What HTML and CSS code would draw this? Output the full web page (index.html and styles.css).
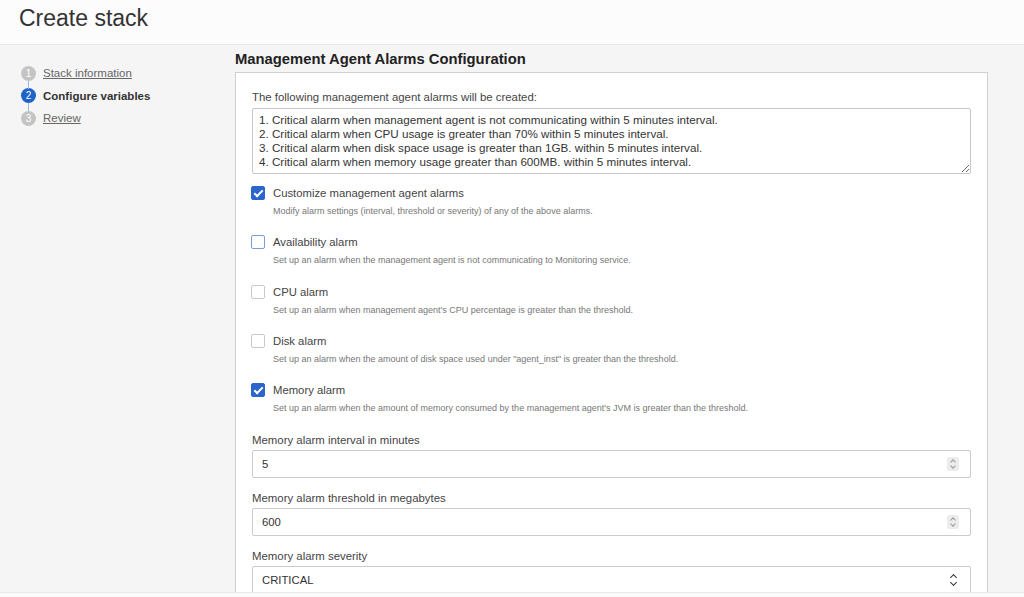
FILE: index.html
```html
<!DOCTYPE html>
<html lang="en">
<head>
  <meta charset="UTF-8" />
  <title>Create stack</title>
  <link rel="stylesheet" href="styles.css">
</head>
<body>
  <header class="page-header">
    <h1>Create stack</h1>
  </header>

  <div class="layout">
    <nav class="steps">
      <ol>
        <li class="step done"><span class="num">1</span><a href="#">Stack information</a></li>
        <li class="step current"><span class="num">2</span><span class="name">Configure variables</span></li>
        <li class="step"><span class="num">3</span><a href="#">Review</a></li>
      </ol>
    </nav>

    <main class="content">
      <h2>Management Agent Alarms Configuration</h2>
      <section class="panel">
        <label class="field-label">The following management agent alarms will be created:</label>
        <textarea class="alarm-list" readonly>1. Critical alarm when management agent is not communicating within 5 minutes interval.
2. Critical alarm when CPU usage is greater than 70% within 5 minutes interval.
3. Critical alarm when disk space usage is greater than 1GB. within 5 minutes interval.
4. Critical alarm when memory usage greater than 600MB. within 5 minutes interval.</textarea>

        <div class="check-row">
          <span class="box checked"></span>
          <span class="check-label">Customize management agent alarms</span>
        </div>
        <p class="hint">Modify alarm settings (interval, threshold or severity) of any of the above alarms.</p>

        <div class="check-row">
          <span class="box focused"></span>
          <span class="check-label">Availability alarm</span>
        </div>
        <p class="hint">Set up an alarm when the management agent is not communicating to Monitoring service.</p>

        <div class="check-row">
          <span class="box"></span>
          <span class="check-label">CPU alarm</span>
        </div>
        <p class="hint">Set up an alarm when management agent's CPU percentage is greater than the threshold.</p>

        <div class="check-row">
          <span class="box"></span>
          <span class="check-label">Disk alarm</span>
        </div>
        <p class="hint">Set up an alarm when the amount of disk space used under "agent_inst" is greater than the threshold.</p>

        <div class="check-row">
          <span class="box checked"></span>
          <span class="check-label">Memory alarm</span>
        </div>
        <p class="hint">Set up an alarm when the amount of memory consumed by the management agent's JVM is greater than the threshold.</p>

        <div class="field">
          <label class="field-label">Memory alarm interval in minutes</label>
          <div class="input"><span>5</span><span class="spin"></span></div>
        </div>

        <div class="field">
          <label class="field-label">Memory alarm threshold in megabytes</label>
          <div class="input"><span>600</span><span class="spin"></span></div>
        </div>

        <div class="field">
          <label class="field-label">Memory alarm severity</label>
          <div class="input select"><span>CRITICAL</span><span class="chev"></span></div>
        </div>
      </section>
    </main>
  </div>

  <footer class="page-footer"></footer>
</body>
</html>
```

FILE: styles.css
```css
* {
  margin: 0;
  padding: 0;
  box-sizing: border-box;
}

body {
  height: 100vh;
  display: flex;
  flex-direction: column;
  overflow: hidden;
  background-color: #f5f5f5;
  color: #333;
  font-family: "Liberation Sans", Arial, sans-serif;
}

.page-header {
  height: 45px;
  flex-shrink: 0;
  padding: 5px 19px 0;
  background-color: #fcfcfc;
  border-bottom: 1px solid #e6e6e6;
}

.page-header h1 {
  font-size: 23px;
  font-weight: normal;
  line-height: 26px;
  color: #333;
}

.layout {
  flex: 1;
  display: flex;
  overflow: hidden;
}

/* left wizard steps */
.steps {
  width: 235px;
  flex-shrink: 0;
  padding: 17px 0 0 21px;
}

.steps ol {
  list-style: none;
}

.step {
  position: relative;
  display: flex;
  align-items: center;
  gap: 7px;
  height: 22.5px;
  font-size: 11.5px;
}

.step + .step::before {
  content: "";
  position: absolute;
  left: 7px;
  top: -4px;
  width: 1px;
  height: 8px;
  background-color: #9fb8e0;
}

.step .num {
  width: 15px;
  height: 15px;
  border-radius: 50%;
  background-color: #c4c4c4;
  color: #fff;
  font-size: 10px;
  line-height: 15px;
  text-align: center;
}

.step a {
  color: #666;
  text-decoration: underline;
}

.step.current .num {
  background-color: #1f62c8;
}

.step.current .name {
  font-weight: bold;
  color: #333;
}

/* main form */
.content {
  width: 753px;
  padding-top: 6px;
}

.content h2 {
  font-size: 14.8px;
  line-height: 17px;
  font-weight: bold;
  color: #222;
  margin-bottom: 4px;
}

.panel {
  background-color: #fff;
  border: 1px solid #cfcfcf;
  border-bottom: none;
  padding: 17px 17px 40px 16px;
  height: 600px;
}

.field-label {
  display: block;
  font-size: 11.4px;
  line-height: 14px;
  color: #444;
}

.alarm-list {
  display: block;
  width: 719px;
  height: 66px;
  margin-top: 4px;
  padding: 4px 6px;
  border: 1px solid #c8c8c8;
  border-radius: 2px;
  font-family: "Liberation Sans", Arial, sans-serif;
  font-size: 11.65px;
  line-height: 14px;
  color: #333;
  resize: vertical;
  overflow: hidden;
}

.check-row {
  display: flex;
  align-items: center;
  gap: 8px;
  height: 14px;
  margin-top: 18.25px;
  margin-left: -1px;
}

.alarm-list + .check-row {
  margin-top: 12px;
}

.box {
  width: 14px;
  height: 14px;
  border: 1px solid #c9c9c9;
  border-radius: 2px;
  background-color: #fff;
  position: relative;
}

.box.focused {
  border: 1.5px solid #7b9be0;
}

.box.checked {
  background-color: #2c66cc;
  border-color: #2c66cc;
}

.box.checked::after {
  content: "";
  position: absolute;
  left: 4px;
  top: 1px;
  width: 3px;
  height: 7px;
  border: solid #fff;
  border-width: 0 2px 2px 0;
  transform: rotate(45deg);
}

.check-label {
  font-size: 11.3px;
  color: #444;
}

.hint {
  margin-top: 6px;
  margin-left: 21px;
  font-size: 9px;
  line-height: 11px;
  color: #777;
}

.field {
  margin-top: 13px;
}

.hint + .field {
  margin-top: 19px;
}

.input {
  display: flex;
  align-items: center;
  justify-content: space-between;
  width: 719px;
  height: 28px;
  margin-top: 3px;
  padding: 0 11px 0 9px;
  border: 1px solid #cbcbcb;
  border-radius: 2px;
  background-color: #fff;
  font-size: 11.3px;
  color: #333;
}

.spin {
  width: 12px;
  height: 14px;
  background-color: #ececec;
  border-radius: 2px;
  position: relative;
}

.spin::before,
.spin::after {
  content: "";
  position: absolute;
  left: 4px;
  width: 3px;
  height: 3px;
  border: solid #999;
  border-width: 1px 0 0 1px;
}

.spin::before {
  top: 3px;
  transform: rotate(45deg);
}

.spin::after {
  top: 7px;
  transform: rotate(225deg);
}

.select .chev {
  width: 10px;
  height: 14px;
  position: relative;
}

.select .chev::before,
.select .chev::after {
  content: "";
  position: absolute;
  left: 2px;
  width: 4px;
  height: 4px;
  border: solid #333;
  border-width: 1.5px 0 0 1.5px;
}

.select .chev::before {
  top: 2px;
  transform: rotate(45deg);
}

.select .chev::after {
  top: 7px;
  transform: rotate(225deg);
}

.page-footer {
  height: 5px;
  flex-shrink: 0;
  background-color: #fafafa;
  border-top: 1px solid #e8e8e8;
}
```
